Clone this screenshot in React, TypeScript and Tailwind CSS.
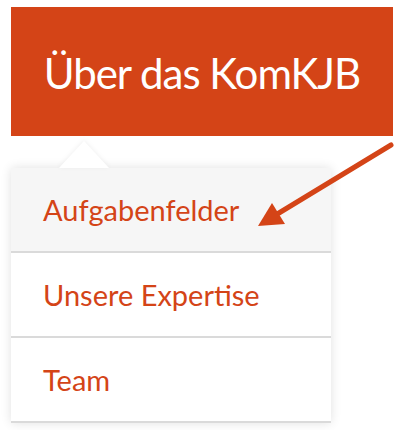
import React from 'react';

const items = ['Aufgabenfelder', 'Unsere Expertise', 'Team'];

const Arrow: React.FC = () => (
    <svg className="absolute left-[250px] top-[138px]" width="150" height="100" viewBox="250 138 150 100">
        <line x1="391" y1="145" x2="274" y2="216" stroke="#d44417" strokeWidth="5" strokeLinecap="round" />
        <polygon points="258,226 272,203 285,224" fill="#d44417" />
    </svg>
);

const App: React.FC = () => {
    return (
        <div className="relative w-[400px] h-[430px] bg-white pt-[7px] pl-[11px] font-['Lato',sans-serif]">
            <div className="w-[382px] h-[129px] bg-[#d44417] flex items-center justify-center">
                <h1 className="text-white text-[42px] leading-none tracking-[-1px] mt-[2px]">Über das KomKJB</h1>
            </div>

            <div className="relative mt-[32px] w-[320px] bg-white shadow-[0_0_10px_rgba(0,0,0,0.12)]">
                <div className="absolute -top-[27px] left-[48px] w-0 h-0 border-l-[25px] border-r-[25px] border-b-[27px] border-l-transparent border-r-transparent border-b-white drop-shadow-[0_-1px_2px_rgba(0,0,0,0.06)]"></div>
                {items.map((item, index) => (
                    <div
                        key={item}
                        className={`h-[85px] flex items-center pl-[32px] border-b-2 border-[#dadada] ${index === 0 ? 'bg-[#f6f6f6]' : 'bg-white'}`}
                    >
                        <span className="text-[#d44417] text-[29px] leading-none">{item}</span>
                    </div>
                ))}
            </div>

            <Arrow />
        </div>
    );
};

export default App;
